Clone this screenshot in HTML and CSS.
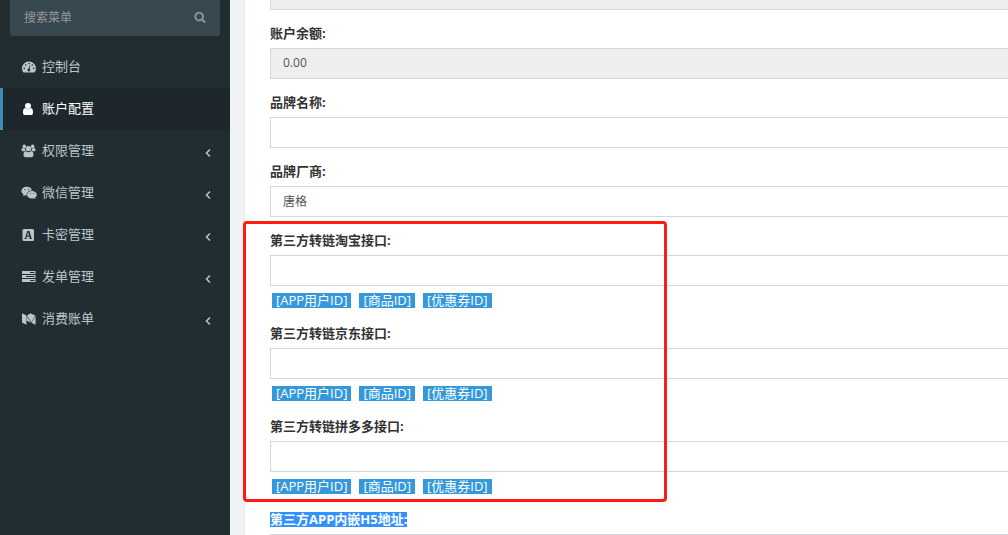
FILE: index.html
```html
<!DOCTYPE html>
<html lang="zh-CN">
<head>
    <meta charset="UTF-8">
    <meta name="viewport" content="width=device-width, initial-scale=1.0">
    <title>账户配置</title>
    <link rel="stylesheet" href="styles.css">
</head>
<body>
    <div class="page">
        <aside class="sidebar">
            <form class="search">
                <input type="text" class="search-input" placeholder="搜索菜单" aria-label="搜索菜单">
                <button type="button" class="search-btn" aria-label="搜索">
                    <svg viewBox="0 0 1792 1792"><path d="M1216 832q0-185-131.5-316.5t-316.5-131.5-316.5 131.5-131.5 316.5 131.5 316.5 316.5 131.5 316.5-131.5 131.5-316.5zm512 832q0 52-38 90t-90 38q-54 0-90-38l-343-342q-179 124-399 124-143 0-273.5-55.5t-225-150-150-225-55.5-273.5 55.5-273.5 150-225 225-150 273.5-55.5 273.5 55.5 225 150 150 225 55.5 273.5q0 220-124 399l343 343q37 37 37 90z"/></svg>
                </button>
            </form>
            <nav class="menu">
                <a href="#" class="menu-item">
                    <svg class="icon" viewBox="0 0 14 14"><path fill-rule="evenodd" d="M7 1.500a6.900 6.900 0 0 1 6.900 6.900c0 1.400-.4 2.600-1 3.700-.1.200-.3.400-.6.400H1.700c-.3 0-.5-.2-.6-.4A6.900 6.900 0 0 1 7 1.500zM2.300 7.600a.8.800 0 1 0 0 1.600.8.800 0 0 0 0-1.600zM3.800 4.300a.8.800 0 1 0 0 1.600.8.800 0 0 0 0-1.600zM7 2.800a.8.800 0 1 0 0 1.600.8.800 0 0 0 0-1.600zM10.200 4.300a.8.800 0 1 0 0 1.600.8.800 0 0 0 0-1.600zM11.700 7.600a.8.800 0 1 0 0 1.600.8.800 0 0 0 0-1.600zM7.500 5.500l-.7 3a1.400 1.400 0 1 0 .8.200l.7-3z"/></svg>
                    <span>控制台</span>
                </a>
                <a href="#" class="menu-item active">
                    <svg class="icon" viewBox="0 0 14 14"><circle cx="6" cy="4" r="3"/><path d="M3.100 6.100C1.500 6.300 1 8.200 1 10.400 1 12 1.700 13 3 13h6c1.300 0 2-1 2-2.600 0-2.200-.5-4.100-2.100-4.300a4 4 0 0 1-5.800 0z"/></svg>
                    <span>账户配置</span>
                </a>
                <a href="#" class="menu-item">
                    <svg class="icon" viewBox="0 0 14 14"><circle cx="2.300" cy="2.400" r="1.800"/><circle cx="10.700" cy="2.400" r="1.800"/><circle cx="6.500" cy="4.600" r="2.700"/><path d="M.5 4C-.3 4-.5 5-.5 6c0 .9.500 1.300 1.200 1.300h1.400c.3-.4.800-.6 1.500-.6A4 4 0 0 1 3 4.300C2.100 4.600 1.300 4.500.5 4zM12.500 4c.8 0 1 1 1 2 0 .9-.5 1.300-1.200 1.300h-1.400c-.3-.4-.8-.6-1.500-.6.5-.8.700-1.600.6-2.400.9.300 1.700.2 2.500-.3zM3.800 7C2.200 7.200 1.500 8.900 1.500 11.100c0 1.300.8 2.100 2 2.100h6c1.200 0 2-.8 2-2.100 0-2.200-.7-3.900-2.300-4.100a4 4 0 0 1-5.400 0z"/></svg>
                    <span>权限管理</span>
                    <svg class="arrow" viewBox="0 0 6 10"><path d="M5 1.500L1.500 5 5 8.500"/></svg>
                </a>
                <a href="#" class="menu-item">
                    <svg class="icon" viewBox="0 0 14 14"><path fill-rule="evenodd" d="M4.700.8c2.800 0 4.900 1.500 5.300 3.600-3.100 0-5.400 1.900-5.400 4.300l.1.900c-.7 0-1.200-.1-1.800-.3l-1.900 1 .6-1.700C.3 7.700-.6 6.600-.6 5.100-.6 2.700 1.800.8 4.700.8zM2.900 3a.6.600 0 1 0 0 1.200.6.600 0 0 0 0-1.200zM6.500 3a.6.600 0 1 0 0 1.200.6.600 0 0 0 0-1.200z"/><path fill-rule="evenodd" d="M9.900 4.900c2.600 0 4.900 1.700 4.900 3.800 0 1.200-.8 2.200-1.800 3l.4 1.400-1.600-.9c-.6.200-1.300.3-1.900.3-2.600 0-4.800-1.700-4.800-3.800s2.200-3.800 4.800-3.800zM8.400 6.900a.5.500 0 1 0 0 1 .5.500 0 0 0 0-1zM11.400 6.900a.5.500 0 1 0 0 1 .5.500 0 0 0 0-1z"/></svg>
                    <span>微信管理</span>
                    <svg class="arrow" viewBox="0 0 6 10"><path d="M5 1.500L1.500 5 5 8.500"/></svg>
                </a>
                <a href="#" class="menu-item">
                    <svg class="icon" viewBox="0 0 14 14"><path fill-rule="evenodd" d="M2 1h8.500A1.500 1.500 0 0 1 12 2.500v9a1.500 1.500 0 0 1-1.500 1.500H2A1.500 1.500 0 0 1 .5 11.500v-9A1.500 1.500 0 0 1 2 1zM5.200 3L3 10.200h-.6v.8h2.400v-.8h-.6l.4-1.400h2.800l.5 1.400h-.6v.8h2.800v-.8h-.6L7.500 3zM5 7.600l1.100-3.400 1 3.400z"/></svg>
                    <span>卡密管理</span>
                    <svg class="arrow" viewBox="0 0 6 10"><path d="M5 1.500L1.500 5 5 8.500"/></svg>
                </a>
                <a href="#" class="menu-item">
                    <svg class="icon" viewBox="0 0 14 14"><path fill-rule="evenodd" d="M0 1h13.500v3H0zM8 2v1h4.500V2zM0 5h13.500v3H0zM4 6v1h8.500V6zM0 9h13.500v3H0zM8 10v1h4.500v-1z"/></svg>
                    <span>发单管理</span>
                    <svg class="arrow" viewBox="0 0 6 10"><path d="M5 1.500L1.500 5 5 8.500"/></svg>
                </a>
                <a href="#" class="menu-item">
                    <svg class="icon" viewBox="0 0 14 14"><path d="M0 1.300l4.400 2.200v9.200L.4 10.700c-.3-.1-.4-.4-.4-.7zM4.800 3.900l4.200 6.900-4.200-2.100zM5 3.600l3.100-2.100c.2-.2.500-.2.700-.1l4.500 2.200-3.900 6.600zM13.600 4v8.100c0 .5-.3.600-.7.400L9.500 10.800z"/></svg>
                    <span>消费账单</span>
                    <svg class="arrow" viewBox="0 0 6 10"><path d="M5 1.500L1.500 5 5 8.500"/></svg>
                </a>
            </nav>
        </aside>

        <main class="content">
            <form class="panel">
                <div class="form-group">
                    <input type="text" class="form-control" aria-label="账户" disabled>
                </div>
                <div class="form-group">
                    <label for="balance">账户余额:</label>
                    <input type="text" class="form-control" id="balance" value="0.00" disabled>
                </div>
                <div class="form-group">
                    <label for="brand">品牌名称:</label>
                    <input type="text" class="form-control" id="brand">
                </div>
                <div class="form-group">
                    <label for="vendor">品牌厂商:</label>
                    <input type="text" class="form-control" id="vendor" value="唐格">
                </div>

                <div class="highlight">
                    <div class="form-group">
                        <label for="taobao">第三方转链淘宝接口:</label>
                        <input type="text" class="form-control" id="taobao">
                        <div class="tags">
                            <button type="button" class="tag">[APP用户ID]</button>
                            <button type="button" class="tag">[商品ID]</button>
                            <button type="button" class="tag">[优惠券ID]</button>
                        </div>
                    </div>
                    <div class="form-group">
                        <label for="jd">第三方转链京东接口:</label>
                        <input type="text" class="form-control" id="jd">
                        <div class="tags">
                            <button type="button" class="tag">[APP用户ID]</button>
                            <button type="button" class="tag">[商品ID]</button>
                            <button type="button" class="tag">[优惠券ID]</button>
                        </div>
                    </div>
                    <div class="form-group">
                        <label for="pdd">第三方转链拼多多接口:</label>
                        <input type="text" class="form-control" id="pdd">
                        <div class="tags">
                            <button type="button" class="tag">[APP用户ID]</button>
                            <button type="button" class="tag">[商品ID]</button>
                            <button type="button" class="tag">[优惠券ID]</button>
                        </div>
                    </div>
                    <div class="highlight-box"></div>
                </div>

                <div class="form-group">
                    <label for="h5"><span class="selected">第三方APP内嵌H5地址:</span></label>
                    <input type="text" class="form-control" id="h5">
                </div>
            </form>
        </main>
    </div>
</body>
</html>
```

FILE: styles.css
```css
* {
    box-sizing: border-box;
}

body {
    margin: 0;
    font-family: "Open Sans", "Noto Sans CJK SC", sans-serif;
    font-size: 13px;
    color: #333;
    background-color: #f0f3f6;
}

input,
button {
    font-family: inherit;
}

.page {
    display: flex;
    height: 100vh;
    overflow: hidden;
}

/* Sidebar */
.sidebar {
    flex: 0 0 230px;
    min-width: 0;
    background-color: #222d32;
}

.search {
    display: flex;
    height: 36px;
    margin: 0 10px 10px;
    background-color: #374850;
    border-radius: 0 0 3px 3px;
}

.search-input {
    flex: 1;
    min-width: 0;
    padding: 0 14px 2px;
    border: none;
    background: transparent;
    color: #b8c7ce;
    font-size: 12px;
}

.search-input::placeholder {
    color: #999;
}

.search-btn {
    width: 40px;
    padding: 0 0 2px;
    border: none;
    background: transparent;
    cursor: pointer;
}

.search-btn svg {
    display: block;
    width: 12px;
    height: 12px;
    margin: 0 auto;
    fill: #999;
}

.menu-item {
    display: flex;
    align-items: center;
    height: 42px;
    padding: 0 19px 4px;
    border-left: 3px solid transparent;
    color: #b8c7ce;
    text-decoration: none;
}

.menu-item.active {
    color: #fff;
    background-color: #1e282c;
    border-left-color: #3c8dbc;
}

.icon {
    width: 14px;
    height: 14px;
    margin: 4px 6px 0 0;
    overflow: visible;
    fill: currentColor;
}

.arrow {
    width: 6px;
    height: 10px;
    margin: 8px 0 0 auto;
    fill: none;
    stroke: currentColor;
    stroke-width: 1.5;
}

/* Content */
.content {
    flex: 1;
    min-width: 0;
    padding-left: 14px;
}

/* scrolled up, and wider than the window */
.panel {
    margin: -21px -20px 0 0;
    padding-left: 25px;
    border-left: 1px solid #e4eaec;
    background-color: #fff;
}

.form-group {
    margin-bottom: 15px;
}

.form-group label {
    display: block;
    margin-bottom: 7px;
    line-height: 16px;
    font-weight: 700;
}

.form-control {
    display: block;
    width: 100%;
    height: 31px;
    padding: 0 12px 2px;
    border: 1px solid #d2d6de;
    border-radius: 0;
    background-color: #fff;
    color: #555;
    font-size: 12px;
}

.form-control:disabled {
    background-color: #eee;
}

.tags {
    display: flex;
    align-items: center;
    gap: 8px;
    height: 24px;
    padding: 5px 2px 0;
}

.tag {
    height: 15px;
    padding: 0 4px;
    border: none;
    background-color: #3498db;
    color: #fff;
    font-size: 13px;
    line-height: 15px;
    cursor: pointer;
}

.selected {
    display: inline-block;
    height: 15px;
    line-height: 15px;
    background-color: #3390ff;
    color: #fff;
}

/* Red frame around the third-party link fields */
.highlight {
    position: relative;
}

.highlight-box {
    position: absolute;
    top: -11px;
    bottom: -6px;
    left: -27px;
    width: 424px;
    border: 3px solid #ff1d12;
    border-radius: 4px;
    pointer-events: none;
}
```
